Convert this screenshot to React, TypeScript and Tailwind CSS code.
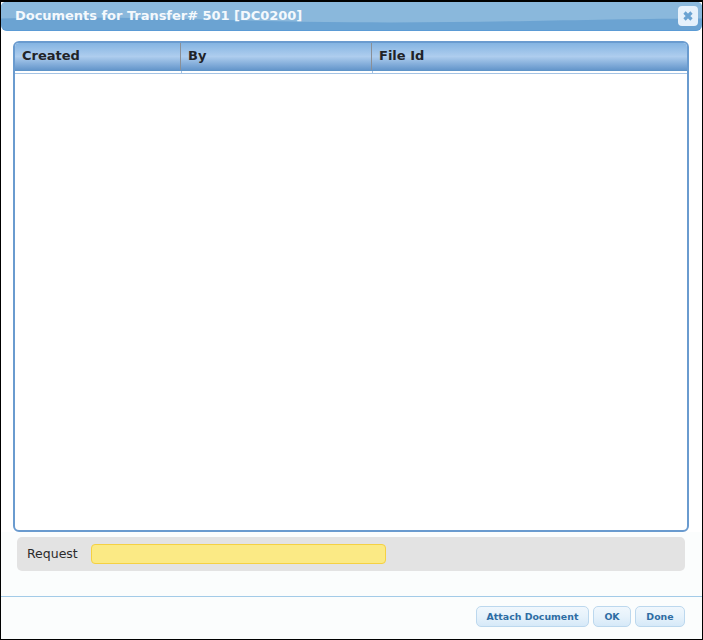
import React from 'react';

const font = { fontFamily: '"DejaVu Sans", sans-serif' };

const ActionButton = ({ label, className }: { label: string; className: string }) => (
  <button className={`h-[21px] rounded-[5px] border border-[#bcd8ee] bg-gradient-to-b from-[#f0f7fd] via-[#e6f2fb] to-[#d6e9f8] pt-px text-[9.4px] font-bold text-[#2e6da4] ${className}`}>
    {label}
  </button>
);

const HeaderCell = ({ label, className }: { label: string; className: string }) => (
  <div className={`flex items-center pb-[2px] pl-[7px] text-[13px] font-bold text-[#1f2328] ${className}`}>{label}</div>
);

const App: React.FC = () => {
  return (
    <div style={font} className="flex h-[640px] w-[703px] flex-col border border-black border-t-2 bg-[#fbfdfd]">
      {/* Title bar */}
      <div className="relative flex h-[29px] items-center overflow-hidden rounded-t-[5px] rounded-b-[6px] border-b border-[#5b9bd5] bg-[#6ba3d2] pl-[14px]">
        <svg className="absolute inset-0 h-full w-full" viewBox="0 0 701 29" preserveAspectRatio="none">
          <path d="M0 0H701V17C560 18 470 22 350 21C230 20 120 14 0 17Z" fill="#8ab8dc" />
        </svg>
        <span className="relative text-[13px] font-bold tracking-[-0.03px] text-[#f4f9fd]">Documents for Transfer# 501 [DC0200]</span>
        <button className="absolute right-[4px] top-[4px] flex h-[20px] w-[20px] items-center justify-center rounded-[4px] bg-[#e6f1fb]">
          <svg width="12" height="12" viewBox="0 0 12 12">
            <path d="M2.5 2.5L9.5 9.5M9.5 2.5L2.5 9.5" stroke="#6ba3d2" strokeWidth="3.2" />
          </svg>
        </button>
      </div>

      {/* Body */}
      <div className="flex flex-1 flex-col bg-white pl-3 pr-[13px] pt-[10px]">
        <div className="flex h-[491px] flex-col overflow-hidden rounded-[6px] border-2 border-[#6a9bcf] bg-white">
          <div className="flex h-[28px] border-b border-[#5f95c9] bg-gradient-to-b from-[#84b4e2] via-[#aecdee] to-[#6496cb]">
            <HeaderCell label="Created" className="w-[166px] border-r border-[#8a8f96]" />
            <HeaderCell label="By" className="w-[191px] border-r border-[#8a8f96]" />
            <HeaderCell label="File Id" className="flex-1" />
          </div>
          <div className="flex h-[3px] border-b border-[#a4c3e4]">
            <div className="w-[167px] border-r border-[#a4c3e4]" />
            <div className="w-[191px] border-r border-[#a4c3e4]" />
          </div>
        </div>
      </div>

      {/* Request row */}
      <div className="bg-[#fbfdfd] pb-[25px]">
        <div className="ml-4 mr-[17px] mt-[5px] flex h-[34px] items-center rounded-[5px] bg-[#e3e3e3] pl-[10px]">
          <span className="w-[64px] text-[12.5px] text-[#2b2b2b]">Request</span>
          <div className="h-[20px] w-[295px] rounded-[4px] border border-[#f5d142] bg-[#fbea85]" />
        </div>
      </div>

      {/* Footer */}
      <div className="flex h-[43px] items-start justify-end gap-[4px] border-t border-[#a3cbe8] bg-[#fbfdfd] pr-[17px] pt-[9px]">
        <ActionButton label="Attach Document" className="w-[113px]" />
        <ActionButton label="OK" className="w-[38px]" />
        <ActionButton label="Done" className="w-[50px]" />
      </div>
    </div>
  );
};

export default App;
